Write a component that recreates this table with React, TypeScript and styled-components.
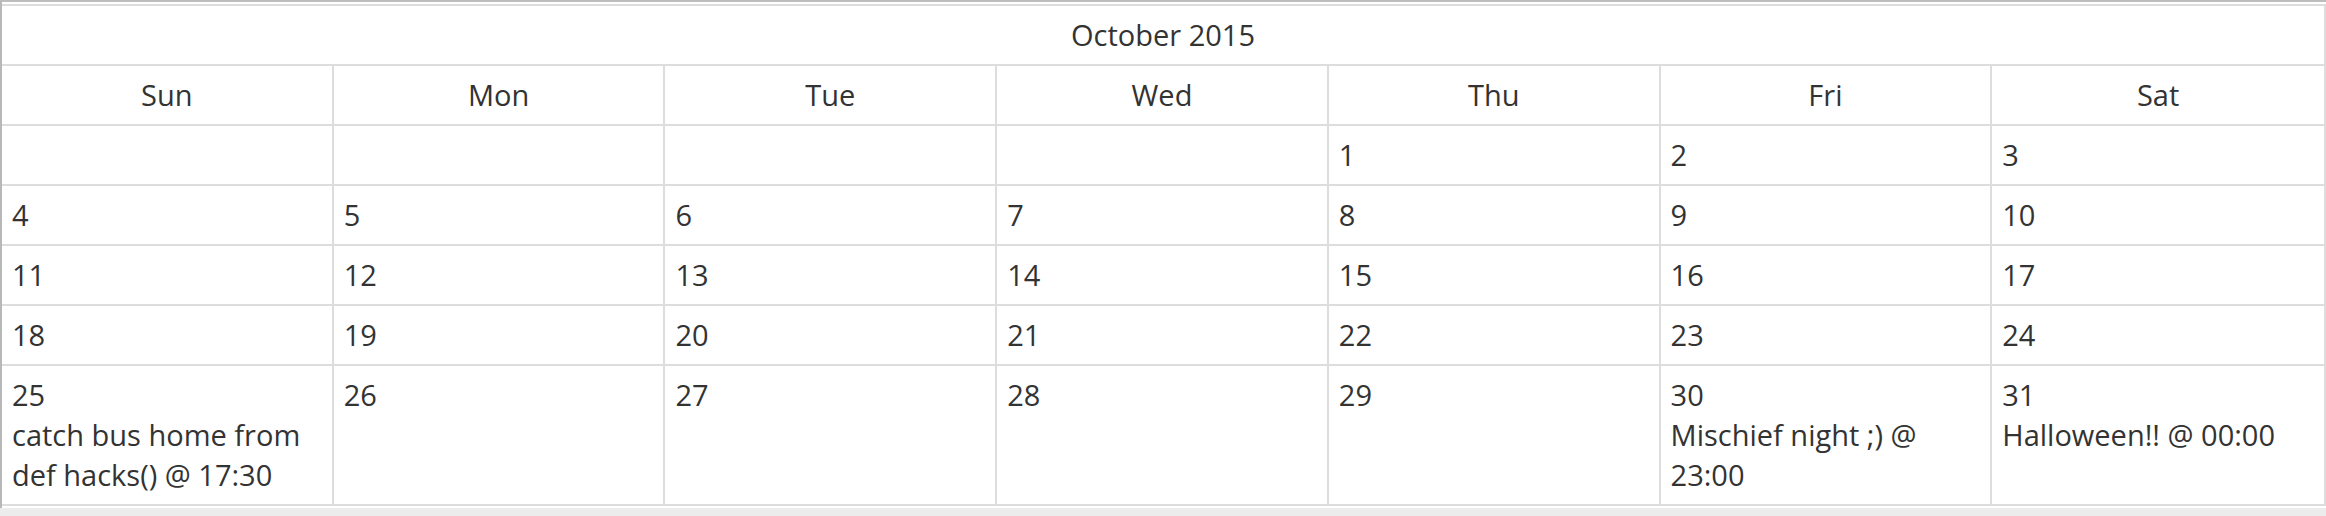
import React from 'react'
import styled, { createGlobalStyle } from 'styled-components'

const GlobalStyle = createGlobalStyle`
  html, body {
    margin: 0;
    padding: 0;
    background: #ececec;
  }
  body {
    font-family: 'Open Sans', 'Liberation Sans', sans-serif;
    color: #333;
  }
`

const Window = styled.div`
  width: 2326px;
  box-sizing: border-box;
  background: #fff;
  border-top: 2px solid #bdbdbd;
  border-left: 2px solid #b8b8b8;
  padding: 2px 0 2px 0;
`

const Calendar = styled.div`
  display: grid;
  grid-template-columns: repeat(7, 1fr);
  border-top: 2px solid #ddd;
  border-right: 2px solid #ddd;
  border-bottom: 2px solid #ddd;
  font-size: 29px;
  line-height: 40px;
`

const Title = styled.div`
  grid-column: 1 / -1;
  text-align: center;
  padding: 9px 10px;
  border-bottom: 2px solid #ddd;
`

const Cell = styled.div<{ $last: boolean; $bottom: boolean; $center?: boolean }>`
  min-width: 0;
  min-height: 40px;
  padding: 9px 10px;
  text-align: ${p => (p.$center ? 'center' : 'left')};
  border-right: ${p => (p.$last ? 'none' : '2px solid #ddd')};
  border-bottom: ${p => (p.$bottom ? 'none' : '2px solid #ddd')};
`

const Event = styled.div`
  overflow-wrap: break-word;
`

const days = ['Sun', 'Mon', 'Tue', 'Wed', 'Thu', 'Fri', 'Sat']

const events: { [day: number]: string } = {
  25: 'catch bus home from def hacks() @ 17:30',
  30: 'Mischief night ;) @ 23:00',
  31: 'Halloween!! @ 00:00',
}

// october 2015 starts on a thursday
const firstWeekday = 4
const daysInMonth = 31

function App() {
  const slots: Array<number | null> = []
  for (let i = 0; i < firstWeekday; i++) slots.push(null)
  for (let d = 1; d <= daysInMonth; d++) slots.push(d)
  while (slots.length % 7 !== 0) slots.push(null)

  const weeks = slots.length / 7

  return (
    <>
      <GlobalStyle />
      <Window>
        <Calendar>
          <Title>October 2015</Title>
          {days.map((day, i) => (
            <Cell key={day} $center $last={i === 6} $bottom={false}>
              {day}
            </Cell>
          ))}
          {slots.map((d, i) => (
            <Cell
              key={i}
              $last={i % 7 === 6}
              $bottom={Math.floor(i / 7) === weeks - 1}
            >
              {d}
              {d && events[d] && <Event>{events[d]}</Event>}
            </Cell>
          ))}
        </Calendar>
      </Window>
    </>
  )
}

export default App
